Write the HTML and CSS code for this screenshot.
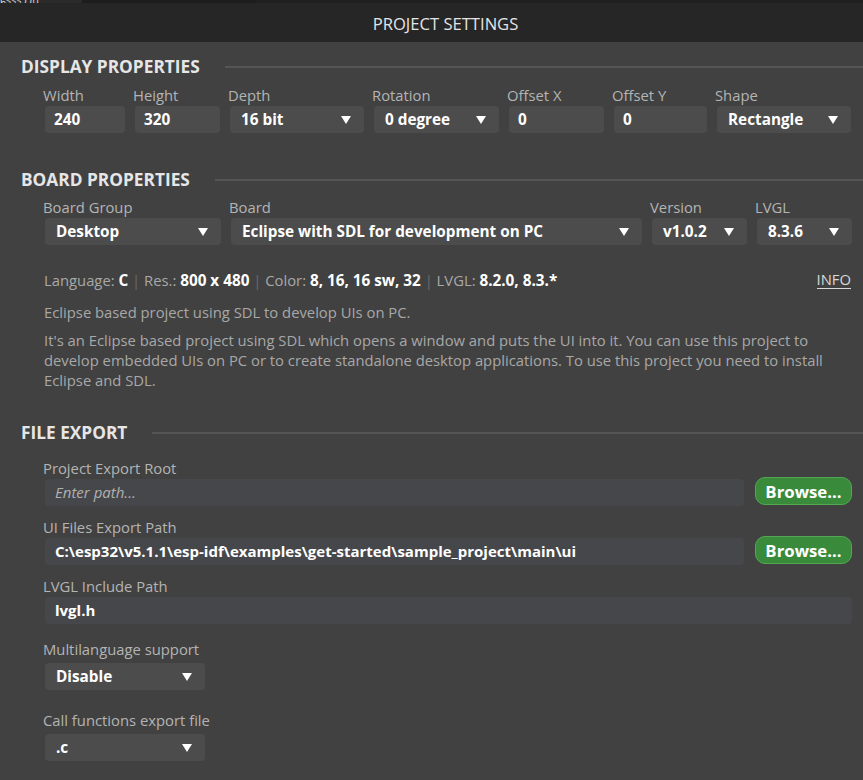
FILE: index.html
```html
<!DOCTYPE html>
<html lang="en">
<head>
<meta charset="utf-8">
<title>Project Settings</title>
<link rel="stylesheet" href="styles.css">
</head>
<body>
<div class="window">
  <div class="topstrip">
    <span class="ts-a">ɕsssɔɔu</span>
    <span class="ts-b"></span>
    <span class="ts-c"></span>
  </div>
  <header class="titlebar">PROJECT SETTINGS</header>
  <main class="content">
    <section class="group group-display">
      <h2 class="group-title">DISPLAY PROPERTIES</h2>
      <div class="fields">
        <div class="field w-width"><label>Width</label><div class="input">240</div></div>
        <div class="field w-height"><label>Height</label><div class="input">320</div></div>
        <div class="field w-depth"><label>Depth</label><div class="select">16 bit<span class="arrow"></span></div></div>
        <div class="field w-rot"><label>Rotation</label><div class="select">0 degree<span class="arrow"></span></div></div>
        <div class="field w-offx"><label>Offset X</label><div class="input">0</div></div>
        <div class="field w-offy"><label>Offset Y</label><div class="input">0</div></div>
        <div class="field w-shape"><label>Shape</label><div class="select">Rectangle<span class="arrow"></span></div></div>
      </div>
    </section>

    <section class="group group-board">
      <h2 class="group-title">BOARD PROPERTIES</h2>
      <div class="fields">
        <div class="field w-bgroup"><label>Board Group</label><div class="select">Desktop<span class="arrow"></span></div></div>
        <div class="field w-board"><label>Board</label><div class="select">Eclipse with SDL for development on PC<span class="arrow"></span></div></div>
        <div class="field w-ver"><label>Version</label><div class="select">v1.0.2<span class="arrow"></span></div></div>
        <div class="field w-lvgl"><label>LVGL</label><div class="select">8.3.6<span class="arrow"></span></div></div>
      </div>
      <div class="info">
        <p class="meta">Language: <b>C</b> <span class="sep">|</span> Res.: <b>800 x 480</b> <span class="sep">|</span> Color: <b>8, 16, 16 sw, 32</b> <span class="sep">|</span> LVGL: <b>8.2.0, 8.3.*</b></p>
        <a class="info-link">INFO</a>
      </div>
      <p class="desc-short">Eclipse based project using SDL to develop UIs on PC.</p>
      <p class="desc-long">It's an Eclipse based project using SDL which opens a window and puts the UI into it. You can use this project to develop embedded UIs on PC or to create standalone desktop applications. To use this project you need to install Eclipse and SDL.</p>
    </section>

    <section class="group group-file">
      <h2 class="group-title">FILE EXPORT</h2>
      <div class="stack">
        <div class="pfield first">
          <label>Project Export Root</label>
          <div class="path-row">
            <div class="path placeholder">Enter path...</div>
            <button class="browse">Browse...</button>
          </div>
        </div>
        <div class="pfield">
          <label>UI Files Export Path</label>
          <div class="path-row">
            <div class="path">C:\esp32\v5.1.1\esp-idf\examples\get-started\sample_project\main\ui</div>
            <button class="browse">Browse...</button>
          </div>
        </div>
        <div class="pfield">
          <label>LVGL Include Path</label>
          <div class="path-row">
            <div class="path">lvgl.h</div>
          </div>
        </div>
        <div class="pfield multi">
          <label>Multilanguage support</label>
          <div class="select small">Disable<span class="arrow"></span></div>
        </div>
        <div class="pfield callf">
          <label>Call functions export file</label>
          <div class="select small">.c<span class="arrow"></span></div>
        </div>
      </div>
    </section>
  </main>
</div>
</body>
</html>
```

FILE: styles.css
```css
* { box-sizing: border-box; }
html, body {
  margin: 0;
  padding: 0;
  background: #414141;
}
body {
  font-family: "Open Sans", "Noto Sans", sans-serif;
  color: #e8e8e8;
  width: 863px;
  height: 780px;
  overflow: hidden;
}
.window {
  width: 863px;
  height: 780px;
  background: #414141;
}
.topstrip {
  height: 3px;
  background: #1d1d1d;
  display: flex;
  overflow: hidden;
}
.ts-a {
  width: 82px;
  background: #2b2b2b;
  color: #cfcfcf;
  font-size: 11px;
  line-height: 0;
  overflow: hidden;
}
.ts-b { width: 175px; }
.ts-c { flex: 1; background: #202020; }
.titlebar {
  height: 39px;
  background: #262626;
  display: flex;
  align-items: center;
  justify-content: center;
  font-size: 16.6px;
  color: #e4e4e4;
  letter-spacing: 0;
  padding-top: 1px;
  padding-left: 28px;
}
.content {
  padding: 0 11px 0 21px;
}
.group-title {
  display: flex;
  align-items: center;
  margin: 0;
  height: 22px;
  font-size: 17.3px;
  font-weight: 700;
  color: #e6e6e6;
  line-height: 22px;
}
.group-title::after {
  content: "";
  flex: 1;
  height: 2px;
  background: #555555;
  margin-left: 25px;
  margin-right: -11px;
  margin-top: -1px;
}
.group-display { padding-top: 14px; }
.group-board { padding-top: 36px; }
.group-file { padding-top: 32px; }

.fields {
  display: flex;
  gap: 10px;
  padding-left: 24px;
  margin-top: 7px;
}
.group-board .fields { margin-top: 6px; }
.field label,
.pfield label {
  display: block;
  font-size: 14.8px;
  line-height: 21px;
  color: #b4b4b4;
  margin-left: -2px;
  margin-bottom: 0;
}
.input, .select {
  height: 27px;
  background: #4c4c4c;
  border-radius: 4px;
  font-size: 15.3px;
  font-weight: 700;
  color: #ffffff;
  line-height: 27px;
  padding-left: 9px;
  position: relative;
  white-space: nowrap;
}
.select { padding-left: 11px; }
.arrow {
  position: absolute;
  right: 13px;
  top: 10px;
  width: 0;
  height: 0;
  border-left: 5px solid transparent;
  border-right: 5px solid transparent;
  border-top: 8px solid #ffffff;
}
.w-width { width: 80px; }
.w-height { width: 85px; }
.w-depth { width: 134px; }
.w-rot { width: 125px; }
.w-offx { width: 95px; }
.w-offy { width: 93px; }
.w-shape { width: 134px; }

.w-bgroup { width: 176px; }
.w-board { width: 411px; }
.w-ver { width: 95px; }
.w-lvgl { width: 95px; }

.info {
  display: flex;
  justify-content: space-between;
  align-items: center;
  margin-top: 25px;
  padding-left: 23px;
}
.meta, .desc-short, .desc-long {
  margin: 0;
  font-size: 14.8px;
  line-height: 20px;
  color: #a8a8a8;
}
.meta b { color: #ffffff; font-weight: 700; font-size: 15.3px; }
.sep { color: #6a6a6a; }
.info-link {
  font-size: 14.8px;
  color: #d8d8d8;
  border-bottom: 1px solid #d8d8d8;
  line-height: 17px;
  margin-right: 1px;
}
.desc-short {
  margin-top: 12px;
  padding-left: 23px;
}
.desc-long {
  margin-top: 8px;
  padding-left: 23px;
  padding-right: 20px;
}

.stack { padding-left: 24px; }
.pfield { margin-top: 11px; }
.pfield.first { margin-top: 14px; }
.pfield.multi { margin-top: 15px; }
.pfield.multi label, .pfield.callf label { margin-bottom: 3px; }
.pfield.callf { margin-top: 20px; }
.path-row {
  display: flex;
  gap: 11px;
  align-items: flex-start;
}
.path {
  flex: 1;
  height: 27px;
  background: #46474b;
  border-radius: 4px;
  font-size: 15px;
  font-weight: 700;
  color: #ffffff;
  line-height: 27px;
  padding-left: 10px;
  white-space: nowrap;
}
.path.placeholder {
  font-weight: 400;
  font-style: italic;
  color: #b0b0b0;
}
.browse {
  width: 97px;
  height: 28px;
  margin-top: -2px;
  background: #3a8a3c;
  border: 1px solid #52a852;
  border-radius: 10px;
  color: #ffffff;
  font-family: "Open Sans", "Noto Sans", sans-serif;
  font-size: 16.8px;
  font-weight: 700;
  padding: 0;
  line-height: 25px;
}
.select.small { width: 160px; }
```
